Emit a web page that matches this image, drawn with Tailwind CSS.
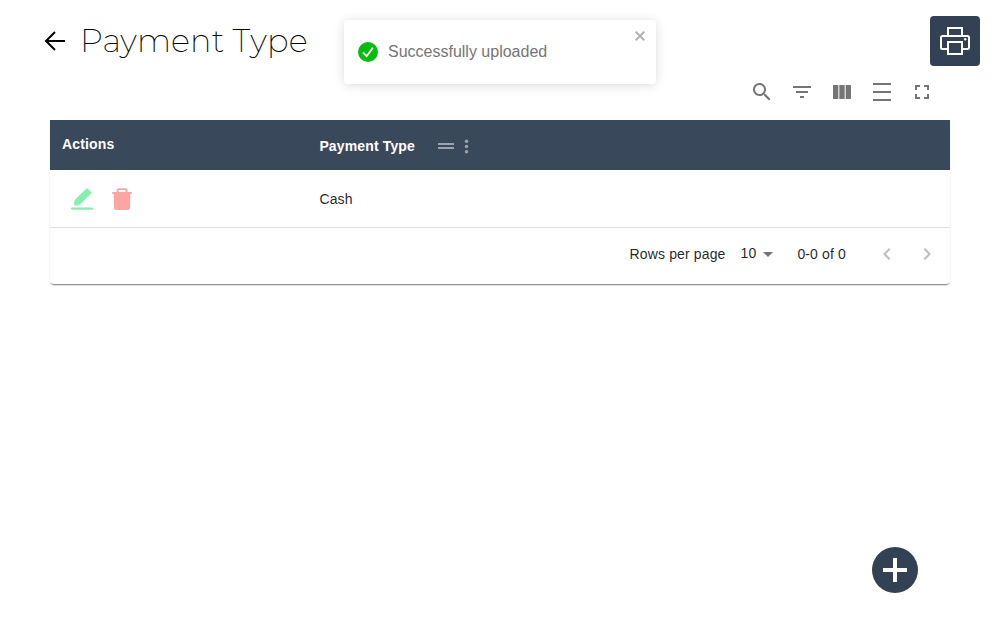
<!DOCTYPE html>
<html lang="en">
<head>
<meta charset="utf-8">
<title>Payment Type</title>
<script src="https://cdn.jsdelivr.net/npm/@tailwindcss/browser@4"></script>
</head>
<body class="relative h-[625px] w-[1000px] overflow-hidden bg-white font-['Liberation_Sans',Arial,sans-serif] text-black">
  <header class="flex h-16 items-start justify-between pt-4 pr-5 pl-[43px]">
    <div class="flex h-[50px] items-center">
      <svg class="size-6" viewBox="0 0 24 24" fill="none" stroke="#000" stroke-width="2"><path d="M22 12H3.500M12 3 3 12l9 9"/></svg>
      <h1 class="ml-[13px] text-[32px] leading-[50px] font-[250] tracking-[0.1px] whitespace-nowrap font-['Montserrat','Inter',sans-serif]">Payment Type</h1>
    </div>
    <button class="flex size-[50px] items-center justify-center rounded bg-[#334155]">
      <svg class="size-[30px]" viewBox="0 0 30 30" fill="none" stroke="#fff" stroke-width="2"><path d="M8 10V2h14v8M8 23H2.500A1.500 1.500 0 0 1 1 21.500V11.500A1.500 1.500 0 0 1 2.500 10h25a1.500 1.500 0 0 1 1.500 1.500v10a1.500 1.500 0 0 1-1.500 1.500H22M8 16h14V28H8z"/><circle cx="25.200" cy="13.200" r="1.200" fill="#fff" stroke="none"/></svg>
    </button>
  </header>

  <main class="mx-[50px]">
    <div class="flex h-14 items-center justify-end gap-4 pr-4 text-[#757575]">
      <svg class="size-6" viewBox="0 0 24 24" fill="currentColor"><path d="M15.500 14h-.79l-.28-.27C15.410 12.590 16 11.110 16 9.500 16 5.910 13.090 3 9.500 3S3 5.910 3 9.500 5.910 16 9.500 16c1.610 0 3.090-.59 4.230-1.570l.27.28v.79l5 4.990L20.490 19l-4.990-5zm-6 0C7.010 14 5 11.990 5 9.500S7.010 5 9.500 5 14 7.010 14 9.500 11.990 14 9.500 14z"/></svg>
      <svg class="size-6" viewBox="0 0 24 24" fill="currentColor"><path d="M10 18h4v-2h-4v2zM3 6v2h18V6H3zm3 7h12v-2H6v2z"/></svg>
      <svg class="size-6" viewBox="0 0 24 24" fill="currentColor"><path d="M14.670 5v14H9.330V5h5.340zm1 14H21V5h-5.330v14zm-7.340 0V5H3v14h5.330z"/></svg>
      <svg class="size-6" viewBox="0 0 24 24" fill="currentColor"><path d="M3 3h18v2H3zm0 16h18v2H3zm0-8h18v2H3z"/></svg>
      <svg class="size-6" viewBox="0 0 24 24" fill="currentColor"><path d="M7 14H5v5h5v-2H7v-3zm-2-4h2V7h3V5H5v5zm12 7h-3v2h5v-5h-2v3zM14 5v2h3v3h2V5h-5z"/></svg>
    </div>

    <section class="h-[164px] rounded-b bg-white text-sm text-black/87 shadow-[0_2px_1px_-1px_rgba(0,0,0,0.3),0_2px_2px_-1px_rgba(0,0,0,0.25),0_1px_3px_0_rgba(0,0,0,0.05)]">
      <div class="grid h-[50px] grid-cols-[257px_1fr] bg-[#3a485b] font-bold text-white">
        <div class="pt-[14px] pl-3 leading-5 tracking-[0.15px]">Actions</div>
        <div class="flex items-center pt-0.5 pl-[12.4px]">
          <span class="w-[114.6px] tracking-[0.14px]">Payment Type</span>
          <svg class="size-6 text-[#9ca3ad]" viewBox="0 0 24 24" fill="currentColor"><path d="M20 9H4v2h16V9zM4 15h16v-2H4v2z"/></svg>
          <svg class="-ml-[2px] size-[21px] text-[#9ca3ad]" viewBox="0 0 24 24" fill="currentColor"><circle cx="12" cy="6" r="2"/><circle cx="12" cy="12" r="2"/><circle cx="12" cy="18" r="2"/></svg>
        </div>
      </div>
      <div class="grid h-[58px] grid-cols-[257px_1fr] items-center border-b border-[#e0e0e0]">
        <div class="flex gap-4 pl-5">
          <svg class="size-6" viewBox="0 0 24 24" fill="#86efac"><path d="m17 1 4.800 4.800L10 17.500q-1 .9-3 .9H4.200v-2.800q0-2 1-3zM2 20.500h20a1 1 0 0 1 0 2.200H2a1 1 0 0 1 0-2.200z"/></svg>
          <svg class="size-6" viewBox="0 0 24 24" fill="#fca5a5"><path fill-rule="evenodd" d="M6.500 5V3.500a2.300 2.300 0 0 1 2.300-2.300h6.400a2.300 2.300 0 0 1 2.300 2.300V5H21a1 1 0 0 1 0 2h-.7L20 21a2 2 0 0 1-2 1.900H6A2 2 0 0 1 4 21L3.700 7H3a1 1 0 0 1 0-2zm2 0h7V3.500a.6.600 0 0 0-.6-.6H9.100a.6.600 0 0 0-.6.600z"/></svg>
        </div>
        <div class="pl-[12.4px] tracking-[0.15px]">Cash</div>
      </div>
      <div class="flex h-[52px] items-center justify-end pr-[11px] tracking-[0.14px]">
        <span class="mr-[15px]">Rows per page</span>
        <span class="-mt-0.5">10</span>
        <svg class="mr-[17px] size-6" viewBox="0 0 24 24" fill="#757575"><path d="m7 10 5 5 5-5z"/></svg>
        <span class="mr-[29px]">0-0 of 0</span>
        <svg class="mr-4 size-6" viewBox="0 0 24 24" fill="#bdbdbd"><path d="M15.410 7.410 14 6l-6 6 6 6 1.410-1.410L10.830 12z"/></svg>
        <svg class="size-6" viewBox="0 0 24 24" fill="#bdbdbd"><path d="M8.590 16.590 13.170 12 8.590 7.410 10 6l6 6-6 6z"/></svg>
      </div>
    </section>
  </main>

  <div class="absolute top-5 left-[344px] flex h-16 w-[312px] items-center rounded bg-white px-3.5 shadow-[0_1px_10px_0_rgba(0,0,0,0.1),0_2px_15px_0_rgba(0,0,0,0.05)]">
    <svg class="size-5" viewBox="0 0 20 20"><circle cx="10" cy="10" r="10" fill="#07bc0c"/><path d="m5 10.500 3.700 3.700 6.200-8.400" fill="none" stroke="#fff" stroke-width="1.800"/></svg>
    <span class="ml-2.5 text-base text-[#757575]">Successfully uploaded</span>
    <svg class="absolute top-[11px] right-[11px] size-2.5" viewBox="0 0 10 10" fill="none" stroke="#b3b3b3" stroke-width="2"><path d="m.7.700 8.600 8.600M9.300.700.700 9.300"/></svg>
  </div>

  <button class="absolute top-[547px] left-[872px] flex size-[46px] items-center justify-center rounded-full bg-[#334155]">
    <svg class="size-6" viewBox="0 0 24 24" fill="#fff"><path d="M10 0h4v10h10v4H14v10h-4V14H0v-4h10z"/></svg>
  </button>
</body>
</html>
